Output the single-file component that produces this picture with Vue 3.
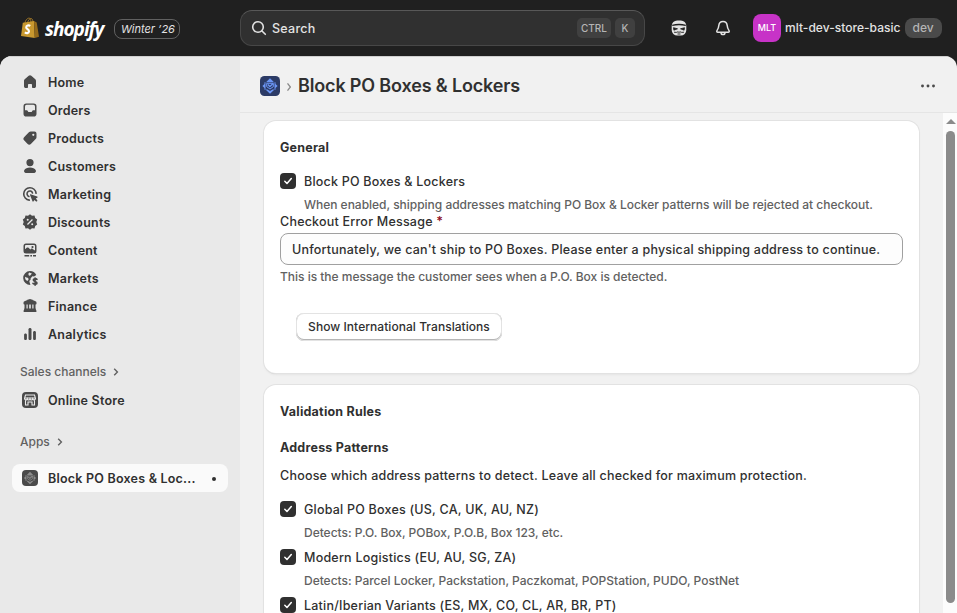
<template>
  <div class="admin">
    <header class="topbar">
      <div class="brand">
        <svg class="bag" viewBox="0 0 20 22" width="20" height="22">
          <path d="M5 6C5.500 2.500 8 .8 9.400 1.200c1.300.300 1.500 2 1.500 4.200M7.500 6C8 3 9.800 1.300 11.200 1.500c1.400.300 1.700 2 1.800 3.600" fill="none" stroke="#9c7426" stroke-width="1" />
          <path d="M2.800 5.800 14 4l.8 17L1 18.900z" fill="#c8982f" />
          <path d="m14 4 2.700 1.400L19 19.800l-4.200 1.200z" fill="#94691a" />
          <path d="M10.300 8.900C8.600 7.900 6.300 8.400 6.200 10.300c-.1 2 3 1.900 2.800 4.100-.2 2-2.400 2.200-4.200 1" fill="none" stroke="#fff" stroke-width="2.100" />
        </svg>
        <span class="wordmark">shopify</span>
        <span class="edition">Winter ’26</span>
      </div>
      <div class="search">
        <svg viewBox="0 0 20 20" width="20" height="20" fill="none" stroke="#e3e3e3" stroke-width="1.600" stroke-linecap="round">
          <circle cx="9" cy="9" r="5.300" /><path d="m13 13 3.300 3.300" />
        </svg>
        <span class="search-text">Search</span>
        <kbd class="wide">CTRL</kbd>
        <kbd>K</kbd>
      </div>
      <div class="user-tools">
        <svg viewBox="0 0 20 20" width="20" height="20">
          <rect x="2.700" y="2.500" width="14.600" height="15" rx="5.500" fill="#e3e3e3" />
          <path d="M3.200 7.300Q10 5.700 16.800 7.300" fill="none" stroke="#202020" stroke-width="1.300" />
          <path d="M4.500 9.700l4 1.100-3.600 1.400zM15.500 9.700l-4 1.100 3.600 1.400z" fill="#202020" stroke="#202020" stroke-width=".8" />
          <path d="M5 14.200q2.500.6 4-.4l1 .6 1-.6q1.500 1 4 .4M8.500 16h3" fill="none" stroke="#202020" stroke-width=".9" />
        </svg>
        <svg viewBox="0 0 20 20" width="20" height="20" fill="none" stroke="#e3e3e3" stroke-width="1.500" stroke-linejoin="round">
          <path d="M10 3.400c-2.500 0-4 1.800-4.200 4.100-.2 2.400-.6 3.500-1.700 4.900-.6.800-.4 1.900.8 1.900h10.200c1.200 0 1.400-1.100.8-1.900-1.100-1.400-1.500-2.500-1.700-4.900C14 5.200 12.500 3.400 10 3.400z" />
          <path d="M8 14.500c0 2.800 4 2.800 4 0" />
        </svg>
      </div>
      <div class="store">
        <span class="avatar">MLT</span>
        <span class="store-name">mlt-dev-store-basic</span>
        <span class="badge">dev</span>
      </div>
    </header>

    <div class="frame">
      <nav class="sidebar">
        <a v-for="item in navItems" :key="item.label" class="nav-item">
          <svg viewBox="0 0 20 20" width="20" height="20" fill="#4a4a4a" fill-rule="evenodd">
            <path v-for="d in item.fills" :key="d" :d="d" />
            <path v-for="d in item.lines" :key="d" :d="d" class="line" />
          </svg>
          <span>{{ item.label }}</span>
        </a>

        <div class="nav-section">Sales channels
          <svg viewBox="0 0 8 10" width="8" height="10"><path d="m2.200 1.800 3.200 3.200-3.200 3.200" /></svg>
        </div>
        <a class="nav-item">
          <svg viewBox="0 0 20 20" width="20" height="20">
            <rect x="2" y="2" width="16" height="16" rx="4" fill="#4a4a4a" />
            <path d="M5.500 5h9l1 3.500c0 1.600-2.400 2-2.800.3-.5 1.500-2.300 1.500-2.700 0-.4 1.500-2.200 1.500-2.700 0-.4 1.700-2.800 1.300-2.800-.3zM5 8h10M5.500 10.500V15H8v-3h4v3h2.500v-4.500" fill="none" stroke="#ebebeb" stroke-width="1.100" />
          </svg>
          <span>Online Store</span>
        </a>

        <div class="nav-section apps">Apps
          <svg viewBox="0 0 8 10" width="8" height="10"><path d="m2.200 1.800 3.200 3.200-3.200 3.200" /></svg>
        </div>
        <a class="nav-item active">
          <svg viewBox="0 0 20 20" width="20" height="20">
            <rect x="2" y="2" width="16" height="16" rx="4" fill="#4a4a4a" />
            <g transform="translate(2 2) scale(.8)" fill="#8c8c8c">
              <path v-for="d in appMark" :key="d" :d="d" />
              <path d="M6.700 7.300h6.600v3.400L10 13l-3.300-2.300z" fill="none" stroke="#8c8c8c" stroke-width="1" />
              <path d="m7.800 8.600 2.100 1.900 3.200-3" fill="none" stroke="#8c8c8c" stroke-width="1.300" />
            </g>
          </svg>
          <span>Block PO Boxes &amp; Loc...</span>
          <i class="dot"></i>
        </a>
      </nav>

      <main class="content">
        <div class="page-header">
          <svg viewBox="0 0 20 20" width="20" height="20" fill="#6c96f5">
            <rect width="20" height="20" rx="4.500" fill="#2c3b66" />
            <path v-for="d in appMark" :key="d" :d="d" />
            <path d="M6.700 7.300h6.600v3.400L10 13l-3.300-2.300z" fill="none" stroke="#6c96f5" stroke-width="1" />
            <path d="m7.800 8.600 2.100 1.900 3.200-3" fill="none" stroke="#6c96f5" stroke-width="1.300" />
          </svg>
          <svg class="crumb" viewBox="0 0 6 10" width="6" height="10"><path d="m1.500 1.300 2.900 3.700-2.900 3.700" /></svg>
          <h1>Block PO Boxes &amp; Lockers</h1>
          <svg class="more" viewBox="0 0 20 20" width="20" height="20" fill="#4a4a4a">
            <circle cx="4.500" cy="10" r="1.450" /><circle cx="10" cy="10" r="1.450" /><circle cx="15.500" cy="10" r="1.450" />
          </svg>
        </div>

        <div class="scroll-area">
          <div class="cards">
            <section class="card general">
              <h2>General</h2>
              <label class="check" @click="enabled = !enabled">
                <span :class="['box', { on: enabled }]"><svg v-if="enabled" viewBox="0 0 16 16"><path d="m4.800 8.300 2.200 2.200 4.300-5" /></svg></span>
                <span class="check-label">Block PO Boxes &amp; Lockers</span>
              </label>
              <p class="help indent">When enabled, shipping addresses matching PO Box &amp; Locker patterns will be rejected at checkout.</p>
              <div class="field-label">Checkout Error Message <b>*</b></div>
              <input v-model="message" type="text" />
              <p class="help">This is the message the customer sees when a P.O. Box is detected.</p>
              <button>Show International Translations</button>
            </section>

            <section class="card rules">
              <h2>Validation Rules</h2>
              <h3>Address Patterns</h3>
              <p class="intro">Choose which address patterns to detect. Leave all checked for maximum protection.</p>
              <div v-for="p in patterns" :key="p.label" class="pattern">
                <label class="check" @click="p.on = !p.on">
                  <span :class="['box', { on: p.on }]"><svg v-if="p.on" viewBox="0 0 16 16"><path d="m4.800 8.300 2.200 2.200 4.300-5" /></svg></span>
                  <span class="check-label">{{ p.label }}</span>
                </label>
                <p v-if="p.help" class="help indent">{{ p.help }}</p>
              </div>
            </section>
          </div>
          <div class="scrollbar">
            <div class="arrow"></div>
            <div class="thumb"></div>
          </div>
        </div>
      </main>
    </div>
  </div>
</template>

<script setup>
import { ref } from 'vue'

const enabled = ref(true)
const message = ref("Unfortunately, we can't ship to PO Boxes. Please enter a physical shipping address to continue.")

const patterns = ref([
  { label: 'Global PO Boxes (US, CA, UK, AU, NZ)', help: 'Detects: P.O. Box, POBox, P.O.B, Box 123, etc.', on: true },
  { label: 'Modern Logistics (EU, AU, SG, ZA)', help: 'Detects: Parcel Locker, Packstation, Paczkomat, POPStation, PUDO, PostNet', on: true },
  { label: 'Latin/Iberian Variants (ES, MX, CO, CL, AR, BR, PT)', help: '', on: true }
])

// four corner pieces of the app logo
const appMark = [
  'm10 2.300 4 4H6z',
  'm10 17.700-4.500-4.300h2L10 15l2.500-1.600h2z',
  'M5.500 6.300v7.400h-1V12L2.400 10l2.100-2V6.300z',
  'M14.500 6.300v7.400h1V12l2.100-2-2.100-2V6.300z'
]

const navItems = [
  { label: 'Home', fills: ['M8.700 3.800a2 2 0 0 1 2.600 0l4 3.500c.5.400.7 1 .7 1.600v5.300c0 1-.8 1.800-1.800 1.800h-1.400c-.5 0-.8-.3-.8-.8V13c0-.6-.4-1-1-1H9c-.6 0-1 .4-1 1v2.200c0 .5-.3.800-.8.800H5.800C4.800 16 4 15.200 4 14.200V8.900c0-.6.2-1.200.7-1.600z'] },
  { label: 'Orders', fills: ['M6.300 3.500h7.400a2.800 2.800 0 0 1 2.800 2.800v7.400a2.800 2.800 0 0 1-2.800 2.800H6.300a2.800 2.800 0 0 1-2.800-2.800V6.300a2.800 2.800 0 0 1 2.800-2.800zM6.600 4.800A1.600 1.600 0 0 0 5 6.400V10.300h1.700c.5 0 .9.300 1.100.7l.2.400c.2.400.5.600.9.600h2.200c.4 0 .7-.2.9-.6l.2-.4c.2-.4.600-.7 1.100-.7H15V6.400A1.600 1.600 0 0 0 13.400 4.800z'] },
  { label: 'Products', fills: ['M10.800 3.500h3.700a2 2 0 0 1 2 2v3.700c0 .7-.3 1.400-.8 1.900l-4.600 4.600a2.600 2.600 0 0 1-3.700 0l-3.100-3.100a2.600 2.600 0 0 1 0-3.700l4.600-4.600c.5-.5 1.200-.8 1.900-.8zM13.300 5.700a1.100 1.100 0 1 0 0 2.200 1.100 1.100 0 0 0 0-2.200z'] },
  { label: 'Customers', fills: ['M10 3a3.600 3.600 0 1 1 0 7.200A3.600 3.600 0 0 1 10 3z', 'M4.200 14.300C5.200 12.300 7.300 11.400 10 11.400s4.800.9 5.800 2.900c.5 1.200-.2 2.600-1.400 2.600H5.600c-1.200 0-1.900-1.400-1.400-2.600z'] },
  { label: 'Marketing', fills: ['m10.500 10.200 6.700 2.400c.6.200.6.900.1 1.100l-1.500.8 1.300 1.400c.8.900-.4 2.100-1.300 1.300l-1.400-1.300-.8 1.400c-.3.500-1 .5-1.100-.1L10 11c-.2-.5.1-.9.500-.8z'], lines: ['M9.300 16.100A6.200 6.200 0 1 1 16.100 9.300', 'M8.900 12.400A2.800 2.800 0 1 1 12.500 8.900'] },
  { label: 'Discounts', fills: ['m10 2.200 2 1.500 2.500-.1.700 2.500 2 1.500-.9 2.400.9 2.400-2 1.500-.7 2.500-2.500-.1-2 1.500-2-1.500-2.500.1-.7-2.500-2-1.500.9-2.400-.9-2.400 2-1.500.7-2.500 2.500.1zM12 7l-5 5 .9.900 5-5zM7.700 6.700a1 1 0 1 0 0 2 1 1 0 0 0 0-2zM12.200 11.200a1 1 0 1 0 0 2 1 1 0 0 0 0-2z'] },
  { label: 'Content', fills: ['M6 3.500h8a2.500 2.500 0 0 1 2.500 2.500v5a2.500 2.500 0 0 1-2.500 2.500H6A2.500 2.500 0 0 1 3.500 11V6A2.500 2.500 0 0 1 6 3.500zM6 5a1 1 0 0 0-1 1v3.300l1.700-1.500c.6-.5 1.300-.5 1.800 0l1.800 1.700.7-.6c.5-.4 1.100-.4 1.600 0L15 10.600V6a1 1 0 0 0-1-1zM12.500 6a1.100 1.100 0 1 1 0 2.200 1.100 1.100 0 0 1 0-2.200z', 'M4.500 15h4.700v1.500H4.500zM10.300 15H12v1.500h-1.700zM13 15h3v1.500h-3z'] },
  { label: 'Markets', fills: ['M10 3a7 7 0 0 1 6.300 4L14 8.600l-1.600-.4-1.700 2-.2 1.800c-1 .2-1.300 1.200-1 2l.9 3A7 7 0 1 1 10 3zM5 8.700l.3 2.600 1.600 1.500.9-.1.900-1.800-1-1.100-1.200-.2zM9.100 4.500 8.300 6l.7 1.700 1.200-.1 1.700-2z'], lines: ['M17 11.300c-1.400-1.200-3.700-.7-3.700.7 0 1.700 3.700 1.200 3.700 2.900 0 1.500-2.600 1.900-4 .5M15.100 10v7.200'] },
  { label: 'Finance', fills: ['M9.200 3.200a2 2 0 0 1 1.600 0l4.700 2.100c.6.300 1 .8 1 1.400v1c0 .5-.3.800-.8.800H4.300c-.5 0-.8-.3-.8-.8v-1c0-.6.4-1.100 1-1.400z', 'M4.500 8h2v5h-2zM7.700 8h1.500v5H7.700zM10.800 8h1.500v5h-1.500zM13.500 8h2v5h-2z', 'M4.500 12.500h11l1 2.600c.2.500-.1.900-.6.900H4.100c-.5 0-.8-.4-.6-.9z'] },
  { label: 'Analytics', fills: ['M10 4c.8 0 1.500.6 1.500 1.300v9.400c0 .7-.7 1.300-1.500 1.300s-1.500-.6-1.500-1.300V5.300C8.500 4.600 9.200 4 10 4z', 'M5.500 9.500c.8 0 1.400.6 1.400 1.300v3.900c0 .7-.6 1.300-1.400 1.300s-1.400-.6-1.400-1.300v-3.900c0-.7.6-1.300 1.400-1.300z', 'M14.500 7c.8 0 1.400.6 1.400 1.300v6.400c0 .7-.6 1.300-1.400 1.300s-1.400-.6-1.400-1.300V8.300c0-.7.6-1.300 1.400-1.300z'] }
]
</script>

<style>
body { margin: 0; background: #202020; overflow: hidden; }
</style>

<style scoped>
.admin {
  height: 100vh; display: flex; flex-direction: column; overflow: hidden;
  background: #202020; color: #303030;
  font: 450 12.5px/20px Inter, "Liberation Sans", sans-serif;
  letter-spacing: 0.22px;
}
.admin * { box-sizing: border-box; }
svg { display: block; flex: none; }
h1, h2, h3, p { margin: 0; }

.topbar { height: 56px; flex: none; display: flex; align-items: center; }
.brand { width: 240px; display: flex; align-items: center; padding: 2px 0 0 20px; }
.bag { margin-top: -2px; }
.wordmark {
  width: 63px; margin-left: 5px; color: #fff;
  font: italic 700 19px/24px "Open Sans", sans-serif; letter-spacing: -1px;
}
.edition {
  width: 66px; height: 20px; margin-left: 6px; padding-left: 6px;
  border: 1px solid #616161; border-radius: 8px;
  color: #e3e3e3; font-size: 11px; line-height: 18px; font-style: italic; letter-spacing: 0; white-space: nowrap;
}
.search {
  width: 405px; height: 36px; display: flex; align-items: center; gap: 4px;
  padding: 0 9px 0 8px; border: 1px solid #474747; border-top-color: #585858;
  border-radius: 12px; background: #303030; color: #e3e3e3;
}
.search-text { flex: 1; margin-left: -1px; padding-top: 2px; letter-spacing: 0.25px; }
kbd {
  width: 20px; height: 20px; border-radius: 5px; background: #404040; color: #b5b5b5;
  font: 500 10px/20px Inter, sans-serif; letter-spacing: 0; text-align: center;
}
kbd.wide { width: 34px; }
.user-tools { display: flex; gap: 24px; margin-left: 24px; }
.store { display: flex; align-items: center; margin-left: 20px; letter-spacing: 0; }
.avatar {
  width: 28px; height: 28px; border-radius: 8px; background: #c733c7; color: #fff;
  font-size: 9px; line-height: 28px; text-align: center;
}
.store-name { margin-left: 4px; color: #e3e3e3; font-size: 12px; font-weight: 550; letter-spacing: 0.03px; }
.badge {
  margin-left: 4px; padding: 0 8px; border-radius: 8px;
  background: #4a4a4a; color: #b5b5b5; font-size: 12px; font-weight: 500;
}

.frame {
  flex: 1; min-height: 0; display: flex; overflow: hidden;
  border-radius: 12px 12px 0 0; background: #f1f1f1;
}
.sidebar { width: 240px; flex: none; padding: 11px 12px; background: #e9e9e9; border-top: 1px solid #d0d0d0; }
.nav-item {
  height: 28px; display: flex; align-items: center; gap: 8px; padding: 0 8px;
  border-radius: 8px; font-weight: 600; white-space: nowrap;
}
.nav-item span { padding-top: 2px; }
.line { fill: none; stroke: #4a4a4a; stroke-width: 1.6; stroke-linecap: round; }
.nav-item.active { background: #fafafa; }
.dot { width: 4px; height: 4px; margin: 2px 4px 0 auto; border-radius: 50%; background: #303030; }
.nav-section {
  height: 28px; display: flex; align-items: center; gap: 6px;
  margin: 10px 0 0; padding-left: 8px; color: #616161; font-size: 12px; font-weight: 550; letter-spacing: 0;
}
.nav-section.apps { margin: 14px 0 8px; }
.nav-section path { fill: none; stroke: #616161; stroke-width: 1.4; }

.content { flex: 1; min-width: 0; display: flex; flex-direction: column; }
.page-header {
  height: 57px; flex: none; display: flex; align-items: center;
  padding: 3px 19px 0 20px; border-bottom: 1px solid #e5e5e5; border-top: 1px solid #d0d0d0;
}
.crumb { margin: 1px 6px 0; }
.crumb path { fill: none; stroke: #8a8a8a; stroke-width: 1.3; }
h1 { font-size: 18px; line-height: 24px; font-weight: 600; letter-spacing: -0.16px; }
.more { margin-left: auto; }
.scroll-area { flex: 1; min-height: 0; display: flex; overflow: hidden; }
.cards { flex: 1; min-width: 0; display: flex; flex-direction: column; gap: 12px; padding: 8px 24px 0; }
.card {
  flex: none; padding: 16px; border-radius: 12px; background: #fff;
  box-shadow: 0 0 0 1px #e2e2e2, 0 1px 0 0 #cfcfcf, 0 2px 2px #e4e4e4;
}
.general { height: 252px; }
h2, h3, .intro, .field-label { height: 20px; padding-top: 1px; }
h2, h3 { font-size: 12.5px; line-height: 20px; font-weight: 650; }
h2 { margin-bottom: 14px; }
.rules h2 { margin-bottom: 16px; }
h3 { margin-bottom: 8px; }
.intro { margin-bottom: 14px; }
.check { display: flex; align-items: center; gap: 8px; height: 20px; }
.check-label { padding-top: 2px; }
.box { width: 16px; height: 16px; border: 1px solid #8a8a8a; border-radius: 4px; }
.box.on { border: 0; background: #303030; }
.box path { fill: none; stroke: #fff; stroke-width: 1.5; stroke-linecap: round; stroke-linejoin: round; }
.help { color: #616161; font-size: 12px; line-height: 16px; letter-spacing: -0.02px; }
.help.indent { margin: 6px 0 0 24px; }
.pattern { height: 48px; }
.field-label { margin-top: -2px; }
.field-label b { color: #8e0b21; font-weight: 600; }
input {
  display: block; width: 100%; height: 32px; margin: 2px 0 4px; padding: 0 11px;
  border: 1px solid #a0a0a0; border-radius: 8px; background: #fdfdfd; color: #303030;
  font: inherit; letter-spacing: 0.21px;
}
button {
  display: block; width: 206px; height: 28px; margin: 28px 0 0 16px; padding: 0;
  border: 0; border-radius: 8px; background: #fff; color: #303030;
  box-shadow: inset 0 0 0 1px #e3e3e3, inset 0 -1px 0 1px #b5b5b5;
  font: 550 12px/26px Inter, sans-serif; letter-spacing: 0.05px;
}
.scrollbar {
  width: 14px; flex: none; display: flex; flex-direction: column; align-items: center;
  padding: 6px 0 10px 1px; background: #fcfcfc;
}
.arrow { border: 5px solid transparent; border-top: 0; border-bottom-color: #8b8b8b; }
.thumb { width: 9px; flex: 1; margin-top: 7px; border-radius: 5px; background: #8b8b8b; }
</style>
